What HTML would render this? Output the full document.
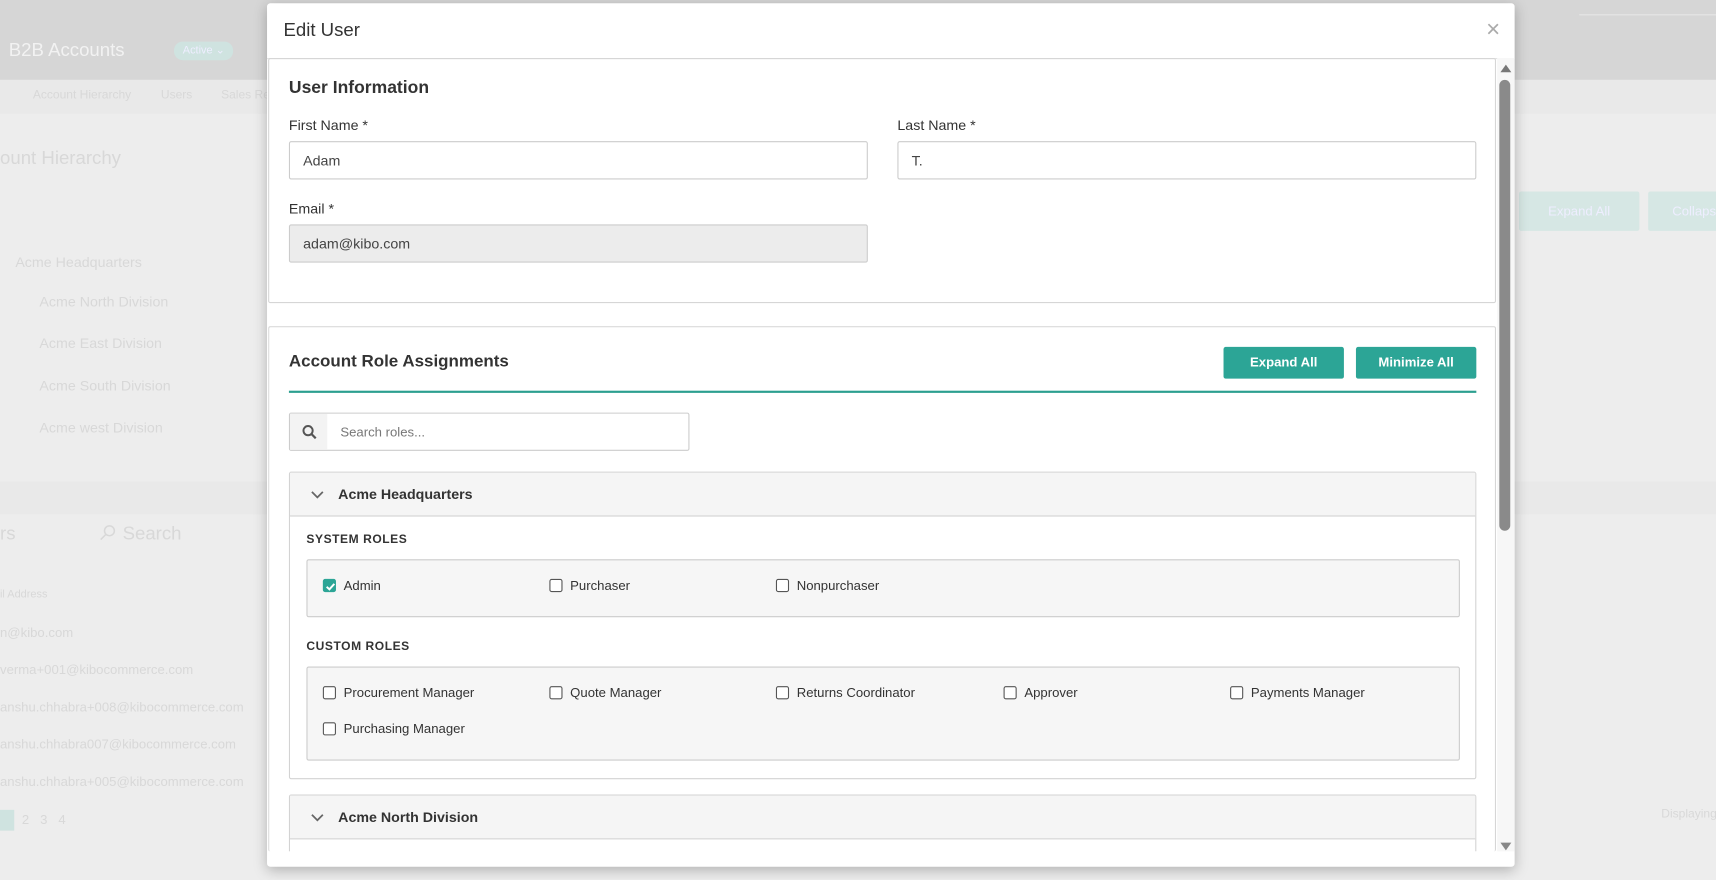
<!DOCTYPE html>
<html><head><meta charset="utf-8"><style>
*{box-sizing:border-box;margin:0;padding:0}
html,body{width:1716px;height:880px;overflow:hidden;background:#ececec;font-family:"Liberation Sans",Arial,sans-serif}
#w{position:absolute;left:0;top:0;width:1568px;height:804px;transform:scale(1.09439);transform-origin:0 0;background:#ededed;overflow:hidden}
.a{position:absolute}
.bg{color:#d8d8d8}
.modal{left:244px;top:3px;width:1140px;height:789px;background:#fff;border-radius:3px;box-shadow:0 3px 12px rgba(0,0,0,.25)}
.lbl{font-size:13px;color:#333}
.inp{height:35px;border:1px solid #ccc;border-radius:2px;font-size:13px;color:#444;padding:9px 12px;background:#fff}
.cb{display:inline-block;width:12px;height:12px;border:1px solid #555;border-radius:2px;vertical-align:-2px;margin-right:7px;background:#fff}
.ck{background:#2ca596;border-color:#2ca596;position:relative}
.it{position:absolute;font-size:12px;color:#333}
.btn{background:#2ca596;color:#fff;font-size:12px;font-weight:bold;text-align:center;line-height:29px;height:29px;border-radius:2px}
.cap{font-size:11px;font-weight:bold;color:#333;letter-spacing:.5px}
.box{background:#f6f6f6;border:1px solid #ccc;border-radius:2px}
</style></head><body><div id="w">
<div class="a" style="left:0;top:0;width:1568px;height:73px;background:#d6d6d6"></div>
<div class="a" style="left:0;top:73px;width:1568px;height:31px;background:#e9e9e9"></div>
<div class="a bg" style="left:8px;top:36px;font-size:17px;color:#f2f2f2">B2B Accounts</div>
<div class="a" style="left:159px;top:38px;width:54px;height:17px;border-radius:8px;background:#cfe3e0;color:#eef;font-size:10px;line-height:17px;padding-left:8px">Active ⌄</div>
<div class="a bg" style="left:30px;top:81px;font-size:11px">Account Hierarchy</div>
<div class="a bg" style="left:147px;top:81px;font-size:11px">Users</div>
<div class="a bg" style="left:202px;top:81px;font-size:11px">Sales Re</div>
<div class="a bg" style="left:0;top:135px;font-size:17px">ount Hierarchy</div>
<div class="a bg" style="left:14px;top:232px;font-size:13px">Acme Headquarters</div>
<div class="a bg" style="left:36px;top:268px;font-size:13px">Acme North Division</div>
<div class="a bg" style="left:36px;top:306px;font-size:13px">Acme East Division</div>
<div class="a bg" style="left:36px;top:345px;font-size:13px">Acme South Division</div>
<div class="a bg" style="left:36px;top:383px;font-size:13px">Acme west Division</div>
<div class="a" style="left:0;top:440px;width:1568px;height:30px;background:#e9e9e9"></div>
<div class="a bg" style="left:0;top:478px;font-size:17px">rs</div>
<svg class="a" style="left:90px;top:479px" width="16" height="16" viewBox="0 0 16 16"><circle cx="10" cy="6" r="4.5" fill="none" stroke="#d8d8d8" stroke-width="1.4"/><path d="M6.8 9.2L2 14" stroke="#d8d8d8" stroke-width="1.4"/></svg>
<div class="a bg" style="left:112px;top:478px;font-size:17px">Search</div>
<div class="a bg" style="left:0;top:538px;font-size:10px">il Address</div>
<div class="a bg" style="left:0;top:571px;font-size:12px">n@kibo.com</div>
<div class="a bg" style="left:0;top:605px;font-size:12px">verma+001@kibocommerce.com</div>
<div class="a bg" style="left:0;top:639px;font-size:12px">anshu.chhabra+008@kibocommerce.com</div>
<div class="a bg" style="left:0;top:673px;font-size:12px">anshu.chhabra007@kibocommerce.com</div>
<div class="a bg" style="left:0;top:707px;font-size:12px">anshu.chhabra+005@kibocommerce.com</div>
<div class="a" style="left:0;top:740px;width:13px;height:19px;background:#cfe3e0"></div>
<div class="a bg" style="left:20px;top:742px;font-size:12px">2 &nbsp; 3 &nbsp; 4</div>
<div class="a" style="left:1388px;top:175px;width:110px;height:36px;background:#d6e7e4;border-radius:2px;color:#eef;font-size:12px;line-height:36px;text-align:center">Expand All</div>
<div class="a" style="left:1506px;top:175px;width:70px;height:36px;background:#d6e7e4;border-radius:2px;color:#eef;font-size:12px;line-height:36px;padding-left:22px">Collaps</div>
<div class="a" style="left:1443px;top:13px;width:125px;height:1px;background:#e6e6e6"></div>
<div class="a bg" style="left:1518px;top:738px;font-size:11px">Displaying</div>

<div class="a modal">
 <div class="a" style="left:15px;top:15px;font-size:17px;color:#333">Edit User</div>
 <div class="a" style="left:1114px;top:11px;font-size:22px;color:#aaa;font-weight:300">×</div>
 <div class="a" style="left:0;top:50px;width:1140px;height:1px;background:#e3e3e3"></div>
 <div class="a" style="left:0;top:50px;width:1140px;height:725px;overflow:hidden">
  <div class="a" style="left:1px;top:0;width:1122px;height:224px;border:1px solid #d6d6d6;border-radius:2px">
   <div class="a" style="left:18px;top:18px;font-size:16px;font-weight:bold;color:#333">User Information</div>
   <div class="a lbl" style="left:18px;top:53px">First Name *</div>
   <div class="a lbl" style="left:574px;top:53px">Last Name *</div>
   <div class="a inp" style="left:18px;top:75px;width:529px">Adam</div>
   <div class="a inp" style="left:574px;top:75px;width:529px">T.</div>
   <div class="a lbl" style="left:18px;top:129px">Email *</div>
   <div class="a inp" style="left:18px;top:151px;width:529px;background:#ececec">adam@kibo.com</div>
  </div>
  <div class="a" style="left:1px;top:245px;width:1122px;height:480px;border:1px solid #d6d6d6;border-bottom:none;border-radius:2px;overflow:hidden">
   <div class="a" style="left:18px;top:23px;font-size:15.5px;font-weight:bold;color:#333">Account Role Assignments</div>
   <div class="a btn" style="left:872px;top:18px;width:110px">Expand All</div>
   <div class="a btn" style="left:993px;top:18px;width:110px">Minimize All</div>
   <div class="a" style="left:18px;top:58px;width:1085px;height:2px;background:#2c9f90"></div>
   <div class="a" style="left:18px;top:78px;width:366px;height:35px;border:1px solid #ccc;border-radius:2px;background:#fff">
    <div class="a" style="left:0;top:0;width:34px;height:33px;background:#f3f3f3"></div>
    <svg class="a" style="left:11px;top:10px" width="14" height="14" viewBox="0 0 14 14"><circle cx="5.5" cy="5.5" r="4.2" fill="none" stroke="#555" stroke-width="1.8"/><path d="M8.6 8.6L12.5 12.5" stroke="#555" stroke-width="2"/></svg>
    <div class="a" style="left:46px;top:10px;font-size:12px;color:#777">Search roles...</div>
   </div>
   <div class="a" style="left:18px;top:132px;width:1085px;height:281px;border:1px solid #d3d3d3;border-radius:2px">
    <div class="a" style="left:0;top:0;width:1083px;height:40px;background:#f5f5f5;border-bottom:1px solid #d3d3d3"></div>
    <svg class="a" style="left:19px;top:16px" width="12" height="8" viewBox="0 0 12 8"><path d="M1 1.5L6 6.5L11 1.5" fill="none" stroke="#666" stroke-width="1.6"/></svg>
    <div class="a" style="left:44px;top:12px;font-size:13px;font-weight:bold;color:#333">Acme Headquarters</div>
    <div class="a cap" style="left:15px;top:55px">SYSTEM ROLES</div>
    <div class="a box" style="left:15px;top:79px;width:1054px;height:53px">
     <div class="it" style="left:14px;top:16px"><span class="cb ck"><svg style="position:absolute;left:1px;top:1px" width="10" height="10" viewBox="0 0 10 10"><path d="M1.5 5.2L4 7.5L8.5 2.5" fill="none" stroke="#fff" stroke-width="1.8"/></svg></span>Admin</div>
     <div class="it" style="left:221px;top:16px"><span class="cb"></span>Purchaser</div>
     <div class="it" style="left:428px;top:16px"><span class="cb"></span>Nonpurchaser</div>
    </div>
    <div class="a cap" style="left:15px;top:153px">CUSTOM ROLES</div>
    <div class="a box" style="left:15px;top:177px;width:1054px;height:86px">
     <div class="it" style="left:14px;top:16px"><span class="cb"></span>Procurement Manager</div>
     <div class="it" style="left:221px;top:16px"><span class="cb"></span>Quote Manager</div>
     <div class="it" style="left:428px;top:16px"><span class="cb"></span>Returns Coordinator</div>
     <div class="it" style="left:636px;top:16px"><span class="cb"></span>Approver</div>
     <div class="it" style="left:843px;top:16px"><span class="cb"></span>Payments Manager</div>
     <div class="it" style="left:14px;top:49px"><span class="cb"></span>Purchasing Manager</div>
    </div>
   </div>
   <div class="a" style="left:18px;top:427px;width:1085px;height:120px;border:1px solid #d3d3d3;border-radius:2px">
    <div class="a" style="left:0;top:0;width:1083px;height:40px;background:#f5f5f5;border-bottom:1px solid #d3d3d3"></div>
    <svg class="a" style="left:19px;top:16px" width="12" height="8" viewBox="0 0 12 8"><path d="M1 1.5L6 6.5L11 1.5" fill="none" stroke="#666" stroke-width="1.6"/></svg>
    <div class="a" style="left:44px;top:12px;font-size:13px;font-weight:bold;color:#333">Acme North Division</div>
   </div>
  </div>
  <div class="a" style="left:1124px;top:0;width:16px;height:725px;background:#f7f7f7"></div>
  <svg class="a" style="left:1126px;top:5px" width="12" height="9"><path d="M1 8L6 1L11 8Z" fill="#777"/></svg>
  <div class="a" style="left:1126px;top:20px;width:10px;height:412px;background:#8a8a8a;border-radius:5px"></div>
  <svg class="a" style="left:1126px;top:716px" width="12" height="9"><path d="M1 1L6 8L11 1Z" fill="#888"/></svg>
 </div>
</div>
</div></body></html>
